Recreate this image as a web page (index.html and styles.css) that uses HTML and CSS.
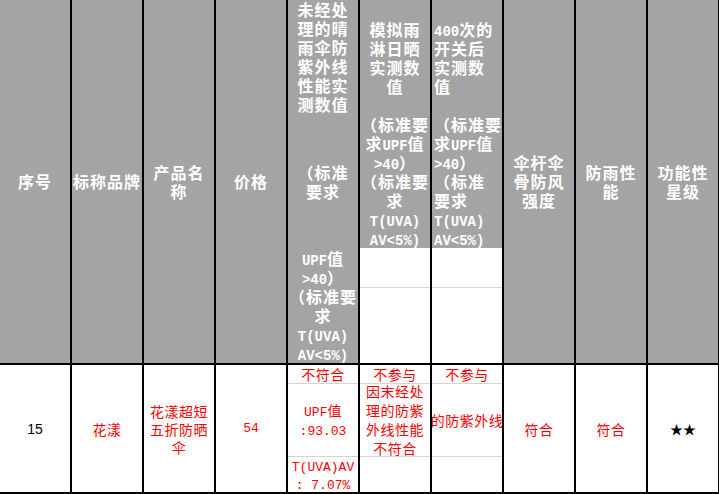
FILE: index.html
```html
<!DOCTYPE html>
<html lang="zh">
<head>
<meta charset="utf-8">
<title>晴雨伞测试</title>
<link rel="stylesheet" href="styles.css">
</head>
<body>
<div class="sheet">
  <div class="hd"><div>序号</div></div>
  <div class="hd"><div>标称品牌</div></div>
  <div class="hd"><div>产品名<br>称</div></div>
  <div class="hd"><div>价格</div></div>
  <div class="hd hd-spread">
    <div>未经处<br>理的晴<br>雨伞防<br>紫外线<br>性能实<br>测数值</div>
    <div>（标准<br>要求</div>
    <div><span class="lat">UPF</span>值<br><span class="lat">&gt;40</span>）<br>（标准要<br>求<br><span class="lat">T(UVA)</span><br><span class="lat">AV&lt;5%)</span></div>
  </div>
  <div class="hd-split">
    <div class="hd-top"><div>模拟雨<br>淋日晒<br>实测数<br>值<br><br>（标准要<br>求<span class="lat">UPF</span>值<br><span class="lat">&gt;40</span>）<br>（标准要<br>求<br><span class="lat">T(UVA)</span><br><span class="lat">AV&lt;5%)</span></div></div>
    <div class="blank-a"></div>
    <div class="blank-b"></div>
  </div>
  <div class="hd-split">
    <div class="hd-top left"><div><span class="lat">400</span>次的<br>开关后<br>实测数<br>值<br><br>（标准要<br>求<span class="lat">UPF</span>值<br><span class="lat">&gt;40</span>）<br>（标准<br>要求<br><span class="lat">T(UVA)</span><br><span class="lat">AV&lt;5%)</span></div></div>
    <div class="blank-a"></div>
    <div class="blank-b"></div>
  </div>
  <div class="hd"><div>伞杆伞<br>骨防风<br>强度</div></div>
  <div class="hd"><div>防雨性<br>能</div></div>
  <div class="hd"><div>功能性<br>星级</div></div>

  <div class="cell num"><div>15</div></div>
  <div class="cell red"><div>花漾</div></div>
  <div class="cell red"><div>花漾超短<br>五折防晒<br>伞</div></div>
  <div class="cell red"><div class="lat">54</div></div>
  <div class="stack">
    <div class="sub s1 red"><div>不符合</div></div>
    <div class="sub s2 red"><div><span class="lat">UPF</span>值<br><span class="lat">:93.03</span></div></div>
    <div class="sub s3 red tight"><div><span class="lat">T(UVA)AV</span><br><span class="lat">: 7.07%</span></div></div>
  </div>
  <div class="stack">
    <div class="sub s1 red"><div>不参与</div></div>
    <div class="sub s2 red"><div>因末经处<br>理的防紫<br>外线性能<br>不符合</div></div>
    <div class="sub s3"></div>
  </div>
  <div class="stack">
    <div class="sub s1 red"><div>不参与</div></div>
    <div class="sub s2 red clip"><div class="nowrap">因末经处理的防紫外线性能不符合</div></div>
    <div class="sub s3"></div>
  </div>
  <div class="cell red"><div>符合</div></div>
  <div class="cell red"><div>符合</div></div>
  <div class="cell star"><div>★★</div></div>
</div>
</body>
</html>
```

FILE: styles.css
```css
html, body {
  margin: 0;
  padding: 0;
  overflow: hidden;
  background: #ffffff;
}

body {
  font-family: "Noto Sans CJK SC", sans-serif;
}

.sheet {
  display: grid;
  grid-template-columns: repeat(10, 70px);
  grid-template-rows: 363px 127px;
  gap: 2px;
  padding: 0 2px 2px 0;
  width: max-content;
  background: #000000;
}

.lat {
  font-family: "Liberation Mono", "Noto Sans CJK SC", monospace;
  font-size: 14px;
  line-height: 1;
  letter-spacing: 0;
}

/* header cells */
.hd {
  background: #a4a4a4;
  color: #ffffff;
  font-weight: 700;
  font-size: 16px;
  letter-spacing: 1px;
  line-height: 19px;
  white-space: nowrap;
  text-align: center;
  display: flex;
  align-items: center;
  justify-content: center;
}

.hd-spread {
  flex-direction: column;
  justify-content: space-between;
}

.hd-split {
  display: flex;
  flex-direction: column;
  background: #ffffff;
}

.hd-top {
  height: 248px;
  box-sizing: border-box;
  background: #a4a4a4;
  color: #ffffff;
  font-weight: 700;
  font-size: 16px;
  letter-spacing: 1px;
  line-height: 19px;
  white-space: nowrap;
  text-align: center;
  display: flex;
  flex-direction: column;
  justify-content: flex-end;
}

.hd-top.left {
  text-align: left;
  padding-left: 2px;
}

.blank-a {
  height: 39px;
  border-bottom: 1px solid #d4d4d4;
}

.blank-b {
  flex: 1;
}

/* data cells */
.cell {
  background: #ffffff;
  font-size: 14px;
  letter-spacing: 0.5px;
  line-height: 18px;
  text-align: center;
  display: flex;
  align-items: center;
  justify-content: center;
  white-space: nowrap;
}

.cell .lat,
.sub .lat {
  font-size: 13px;
}

.num {
  font-family: "Liberation Sans", Arial, sans-serif;
  font-size: 14px;
  letter-spacing: 0;
  color: #000000;
}

.red {
  color: #ff0000;
}

.star {
  color: #000000;
  font-size: 13px;
  letter-spacing: 0;
}

.stack {
  background: #ffffff;
  display: flex;
  flex-direction: column;
}

.sub {
  font-size: 14px;
  letter-spacing: 0.5px;
  line-height: 19px;
  text-align: center;
  white-space: nowrap;
  display: flex;
  align-items: center;
  justify-content: center;
}

.s1 {
  height: 18px;
  border-bottom: 1px solid #d4d4d4;
}

.s2 {
  height: 72px;
  border-bottom: 1px solid #d4d4d4;
}

.s3 {
  flex: 1;
}

.tight {
  line-height: 17.5px;
}

.clip {
  overflow: hidden;
}

.nowrap {
  flex-shrink: 0;
  white-space: nowrap;
}
```
